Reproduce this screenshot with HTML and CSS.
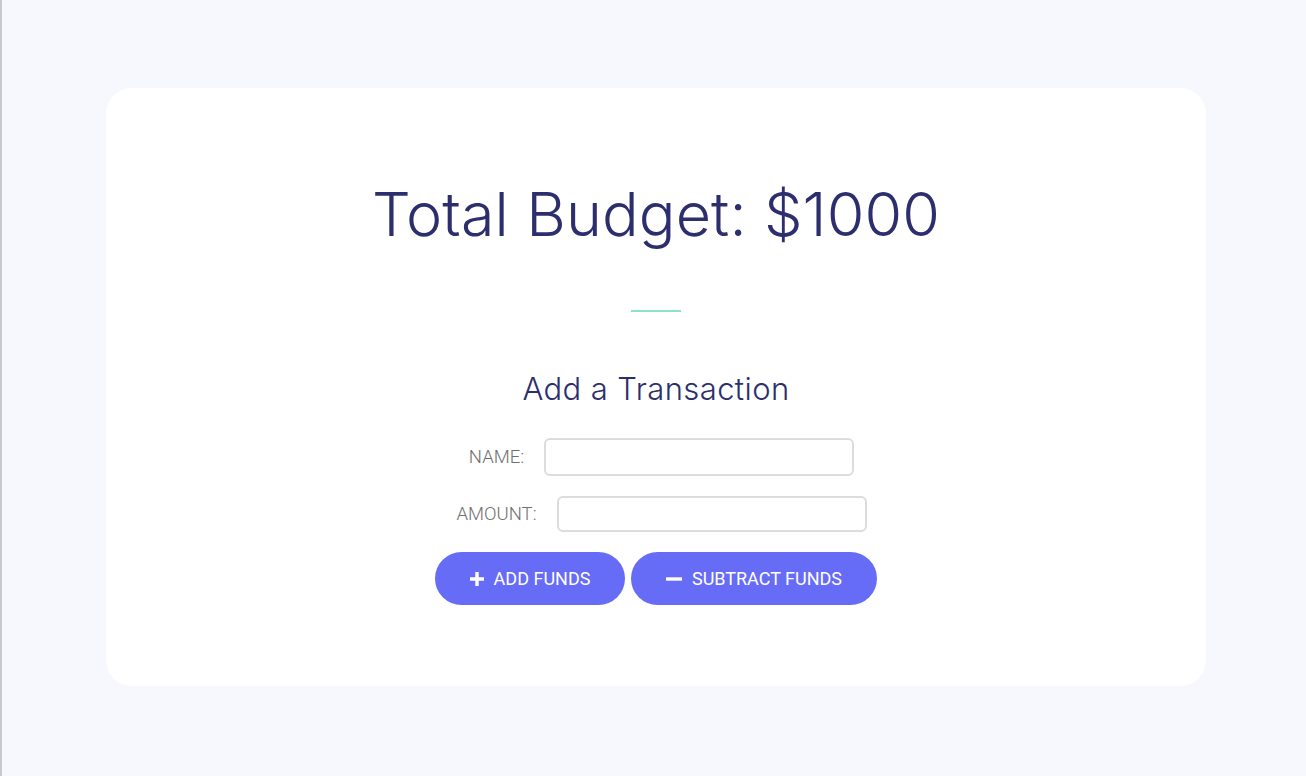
FILE: index.html
```html
<!DOCTYPE html>
<html lang="en">
<head>
<meta charset="utf-8">
<title>Budget</title>
<link rel="stylesheet" href="styles.css">
</head>
<body>
<div class="page">
  <main class="card">
    <h1 class="total">Total Budget: $1000</h1>
    <div class="divider"></div>
    <h2 class="subtitle">Add a Transaction</h2>
    <form class="form">
      <div class="row">
        <label class="label" for="name">Name:</label>
        <input class="field" id="name" type="text">
      </div>
      <div class="row">
        <label class="label" for="amount">Amount:</label>
        <input class="field field-amount" id="amount" type="text">
      </div>
      <div class="actions">
        <button type="button" class="btn btn-add">
          <svg class="icon" viewBox="0 0 14 14" width="14" height="14"><path d="M5.3 0h3.4v5.3H14v3.4H8.7V14H5.3V8.7H0V5.3h5.3z" fill="#fff"/></svg>
          <span>Add Funds</span>
        </button>
        <button type="button" class="btn btn-sub">
          <svg class="icon" viewBox="0 0 16 14" width="16" height="14"><rect x="0" y="5.3" width="16" height="3.4" fill="#fff"/></svg>
          <span>Subtract Funds</span>
        </button>
      </div>
    </form>
  </main>
</div>
</body>
</html>
```

FILE: styles.css
```css
html, body {
  margin: 0;
  padding: 0;
  height: 100%;
}
body {
  background: #f7f8fd;
  border-left: 2px solid #c9c9cc;
  box-sizing: border-box;
  font-family: "Roboto", "Liberation Sans", sans-serif;
}
.page {
  padding: 88px 100px 0 104px;
}
.card {
  width: 1100px;
  box-sizing: border-box;
  background: #fff;
  border-radius: 26px;
  padding: 90px 0 81px;
  display: flex;
  flex-direction: column;
  align-items: center;
}
.total {
  margin: 0;
  font-family: "Inter", "Noto Sans", sans-serif;
  font-weight: 300;
  font-size: 61px;
  line-height: 72px;
  color: #2c2e6d;
  letter-spacing: 0.1px;
}
.divider {
  width: 50px;
  height: 2px;
  background: #8fe3c3;
  margin-top: 60px;
}
.subtitle {
  margin: 59px 0 0;
  font-family: "Inter", "Noto Sans", sans-serif;
  font-weight: 300;
  font-size: 31px;
  line-height: 36px;
  letter-spacing: 0.4px;
  color: #2c2e6d;
}
.form {
  margin-top: 31px;
  display: flex;
  flex-direction: column;
  align-items: center;
  gap: 20px;
}
.row {
  display: flex;
  align-items: center;
  gap: 20px;
  padding-left: 11px;
}
.label {
  font-weight: 300;
  font-size: 18.5px;
  color: #6f6f6f;
  text-transform: uppercase;
}
.field {
  width: 310px;
  height: 38px;
  box-sizing: border-box;
  border: 2px solid #dcdcdc;
  border-radius: 6px;
  background: #fff;
  outline: none;
}
.field-amount {
  height: 36px;
}
.actions {
  display: flex;
  gap: 6px;
}
.btn {
  height: 53px;
  border: none;
  border-radius: 27px;
  background: #676cf6;
  color: #fff;
  font-family: "Roboto", "Liberation Sans", sans-serif;
  font-size: 18px;
  font-weight: 400;
  text-transform: uppercase;
  display: flex;
  align-items: center;
  justify-content: center;
  gap: 10px;
  padding: 0;
  cursor: pointer;
}
.btn-add {
  width: 190px;
}
.btn-sub {
  width: 246px;
}
.icon {
  display: block;
}
```
